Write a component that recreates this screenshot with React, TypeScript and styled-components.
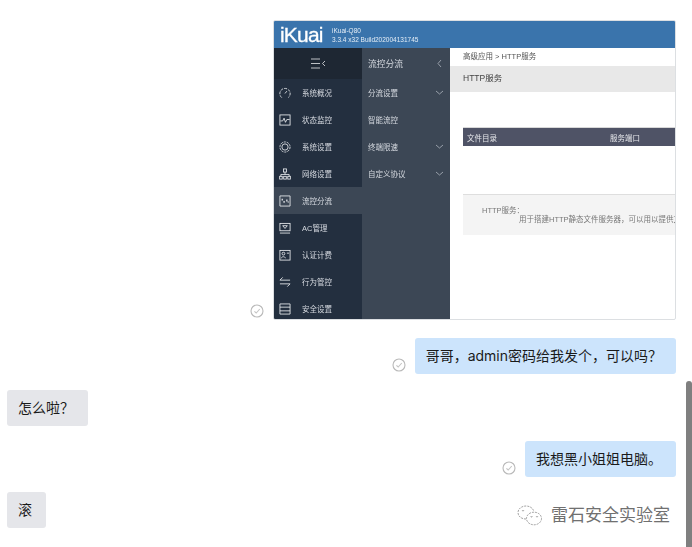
import React from "react";
import styled, { createGlobalStyle } from "styled-components";

const Global = createGlobalStyle`
  html, body { margin: 0; padding: 0; background: #fff; overflow: hidden; }
  body { font-family: "Liberation Sans", "Noto Sans CJK SC", sans-serif; }
`;

const Page = styled.div`
  position: relative;
  width: 692px;
  height: 547px;
  overflow: hidden;
  background: #fff;
`;
const Thread = styled.div`
  display: flex;
  flex-direction: column;
  padding: 20px 16px 0 7px;
`;
const Row = styled.div<{ $mine?: boolean; $gap: number }>`
  display: flex;
  justify-content: ${(p) => (p.$mine ? "flex-end" : "flex-start")};
  align-items: flex-end;
  gap: 9px;
  margin-bottom: ${(p) => p.$gap}px;
`;
const Bubble = styled.div<{ $mine?: boolean }>`
  height: 36px;
  line-height: 36px;
  padding: 0 14px 0 11px;
  border-radius: 3px;
  font-family: Inter, "Noto Sans CJK SC", sans-serif;
  font-size: 14px;
  color: #1a1a1a;
  white-space: nowrap;
  background: ${(p) => (p.$mine ? "#cce4fc" : "#e5e6ea")};
`;
const Sent = styled.svg`
  width: 14px;
  height: 14px;
  margin-bottom: 2px;
  flex: none;
`;

const Shot = styled.div`
  width: 403px;
  height: 300px;
  box-sizing: border-box;
  border: 1px solid #dcdfe2;
  border-radius: 2px;
  overflow: hidden;
  display: flex;
  flex-direction: column;
  background: #fff;
  filter: blur(0.3px);
`;
const Header = styled.div`
  height: 27px;
  flex: none;
  background: #3a74ac;
  display: flex;
  align-items: center;
  padding-left: 6px;
  gap: 8px;
  color: #e4edf6;
`;
const Logo = styled.div`
  font-size: 21px;
  line-height: 27px;
  color: #fff;
  letter-spacing: -0.8px;
  -webkit-text-stroke: 0.3px #fff;
  width: 44px;
`;
const Version = styled.div`
  font-size: 6.5px;
  line-height: 9px;
`;
const ShotBody = styled.div`
  flex: 1;
  display: flex;
  min-height: 0;
`;
const Side = styled.div`
  width: 88px;
  flex: none;
  background: #232f3f;
  display: flex;
  flex-direction: column;
`;
const SideTop = styled.div`
  height: 31px;
  background: #1e2733;
  display: flex;
  align-items: center;
  justify-content: center;
  flex: none;
`;
const SideItem = styled.div<{ $active?: boolean }>`
  height: 27px;
  flex: none;
  display: flex;
  align-items: center;
  padding-left: 5px;
  gap: 11px;
  font-size: 7.5px;
  color: #d5d9df;
  background: ${(p) => (p.$active ? "#3c4755" : "transparent")};
  svg { width: 12px; height: 12px; flex: none; }
`;
const SubNav = styled.div`
  width: 88px;
  flex: none;
  background: #3c4755;
  display: flex;
  flex-direction: column;
  color: #d5d9df;
`;
const SubHead = styled.div`
  height: 31px;
  display: flex;
  align-items: center;
  justify-content: space-between;
  padding: 0 6px;
  font-size: 8.75px;
  flex: none;
`;
const SubItem = styled.div`
  height: 27px;
  display: flex;
  align-items: center;
  justify-content: space-between;
  padding: 0 6px;
  font-size: 7.5px;
  flex: none;
`;
const Content = styled.div`
  flex: 1;
  min-width: 0;
  overflow: hidden;
  display: flex;
  flex-direction: column;
`;
const Crumb = styled.div`
  height: 18px;
  line-height: 17px;
  padding-left: 13px;
  font-size: 7.5px;
  color: #555;
  flex: none;
`;
const TitleBar = styled.div`
  height: 26px;
  line-height: 25px;
  background: #e8e8e8;
  padding-left: 13px;
  font-size: 8.5px;
  color: #444;
  flex: none;
`;
const TableHead = styled.div`
  margin: 35px 0 0 13px;
  height: 19px;
  background: #4f5366;
  border-top: 1px solid #d8d8d8;
  box-sizing: border-box;
  display: grid;
  grid-template-columns: 143px 1fr;
  align-items: center;
  padding-left: 4px;
  font-size: 7.5px;
  color: #e6e7ea;
  flex: none;
`;
const Note = styled.div`
  margin: 48px 0 0 13px;
  height: 41px;
  box-sizing: border-box;
  background: #f4f4f4;
  border-top: 1px solid #dedede;
  padding: 11px 0 0 19px;
  font-size: 7.5px;
  line-height: 9px;
  color: #777;
  white-space: nowrap;
  flex: none;
`;
const NoteLine = styled.div`
  padding-left: 37px;
`;

const Scrollbar = styled.div`
  position: absolute;
  right: 0;
  top: 381px;
  width: 6px;
  height: 166px;
  background: #7f7f7f;
  border-radius: 3px 3px 0 0;
`;
const Watermark = styled.div`
  position: absolute;
  left: 517px;
  top: 505px;
  display: flex;
  align-items: center;
  gap: 8px;
  font-size: 17px;
  line-height: 22px;
  color: #707070;
  text-shadow: 0 0 1px #fff;
  white-space: nowrap;
`;

const Check = () => (
  <Sent viewBox="0 0 14 14" fill="none">
    <circle cx="7" cy="7" r="6" stroke="#b9b9b9" strokeWidth="1.1" />
    <path d="M4.4 7.3 6.2 9 9.8 5" stroke="#c4c4c4" strokeWidth="1.1" />
  </Sent>
);

const Chevron = ({ dir }: { dir: "down" | "left" }) => (
  <svg width="9" height="9" viewBox="0 0 9 9" fill="none" stroke="#aeb5be" strokeWidth="0.8">
    <path d={dir === "down" ? "M1 3 4.5 6 8 3" : "M6 1 3 4.5 6 8"} />
  </svg>
);

const s = { fill: "none", stroke: "#eef0f3", strokeWidth: 0.9 };
const icons: Record<string, React.ReactNode> = {
  gauge: (
    <g {...s}>
      <path d="M3 11.5A5.6 5.6 0 1 1 10 11.5" strokeDasharray="3 1.2" />
      <path d="M6.5 7 8.5 4.5" />
    </g>
  ),
  pulse: (
    <g {...s}>
      <rect x="1" y="1" width="11" height="11" />
      <path d="M1.500 7.500H4L5.500 4.500 7 9 8.500 6H11.500" />
    </g>
  ),
  gear: (
    <g {...s}>
      <circle cx="6.5" cy="6.5" r="5.5" strokeDasharray="2.4 1" />
      <circle cx="6.5" cy="6.5" r="3.4" />
    </g>
  ),
  net: (
    <g {...s}>
      <rect x="4.8" y="1" width="3.4" height="3.4" />
      <path d="M6.500 4.500V7M2 9V7H11V9" />
      <rect x="0.7" y="9" width="2.8" height="3" />
      <rect x="5.1" y="9" width="2.8" height="3" />
      <rect x="9.5" y="9" width="2.8" height="3" />
    </g>
  ),
  flow: (
    <g {...s}>
      <path d="M1 1H12M1 12H12M1 1V12M12 1V12" />
      <path d="M3.500 4V6M5.500 6.500V8.500M8.500 5V7M10 7V8" strokeWidth="1.3" />
    </g>
  ),
  ac: (
    <g {...s}>
      <rect x="1" y="1.5" width="11" height="8" />
      <path d="M4 4H9L6.500 7ZM1 12H12" />
    </g>
  ),
  auth: (
    <g {...s}>
      <rect x="1" y="1.5" width="11" height="10.5" />
      <circle cx="4.8" cy="5" r="1.5" />
      <path d="M2.500 10C3 7.800 6.600 7.800 7 10M8.500 4.500H11" />
    </g>
  ),
  swap: (
    <g {...s}>
      <path d="M1 4.500H12M4 1.500 1 4.500M1 8.500H12M9 11.500 12 8.500" />
    </g>
  ),
  shield: (
    <g {...s}>
      <path d="M1 1H12V12H1ZM1 4.500H12M1 8.500H12" />
    </g>
  ),
};

const sideItems = [
  ["gauge", "系统概况"],
  ["pulse", "状态监控"],
  ["gear", "系统设置"],
  ["net", "网络设置"],
  ["flow", "流控分流"],
  ["ac", "AC管理"],
  ["auth", "认证计费"],
  ["swap", "行为管控"],
  ["shield", "安全设置"],
];
const subItems: [string, boolean][] = [
  ["分流设置", true],
  ["智能流控", false],
  ["终端限速", true],
  ["自定义协议", true],
];

export default function App() {
  return (
    <Page>
      <Global />
      <Thread>
        <Row $mine $gap={18}>
          <Check />
          <Shot>
            <Header>
              <Logo>iKuai</Logo>
              <Version>
                iKuai-Q80
                <br />
                3.3.4 x32 Build202004131745
              </Version>
            </Header>
            <ShotBody>
              <Side>
                <SideTop>
                  <svg width="15" height="11" viewBox="0 0 15 11" fill="none" stroke="#e6e8eb" strokeWidth="0.8">
                    <path d="M0 1H9M0 5.500H9M0 10H9M14 3 11.500 5.500 14 8" />
                  </svg>
                </SideTop>
                {sideItems.map(([icon, label]) => (
                  <SideItem key={label} $active={icon === "flow"}>
                    <svg viewBox="0 0 13 13">{icons[icon]}</svg>
                    <span>{label}</span>
                  </SideItem>
                ))}
              </Side>
              <SubNav>
                <SubHead>
                  <span>流控分流</span>
                  <Chevron dir="left" />
                </SubHead>
                {subItems.map(([label, more]) => (
                  <SubItem key={label}>
                    <span>{label}</span>
                    {more && <Chevron dir="down" />}
                  </SubItem>
                ))}
              </SubNav>
              <Content>
                <Crumb>高级应用 &gt; HTTP服务</Crumb>
                <TitleBar>HTTP服务</TitleBar>
                <TableHead>
                  <span>文件目录</span>
                  <span>服务端口</span>
                </TableHead>
                <Note>
                  HTTP服务：
                  <NoteLine>用于搭建HTTP静态文件服务器，可以用以提供文件</NoteLine>
                </Note>
              </Content>
            </ShotBody>
          </Shot>
        </Row>
        <Row $mine $gap={16}>
          <Check />
          <Bubble $mine>哥哥，admin密码给我发个，可以吗？</Bubble>
        </Row>
        <Row $gap={15}>
          <Bubble>怎么啦？</Bubble>
        </Row>
        <Row $mine $gap={15}>
          <Check />
          <Bubble $mine>我想黑小姐姐电脑。</Bubble>
        </Row>
        <Row $gap={0}>
          <Bubble>滚</Bubble>
        </Row>
      </Thread>
      <Scrollbar />
      <Watermark>
        <svg width="26" height="22" viewBox="0 0 26 22" fill="none" stroke="#8a8a8a" strokeWidth="0.8" strokeDasharray="2 1">
          <path d="M9 14C4 14 1 11 1 7.500S4.500 1 9 1c4 0 7 2.300 7.700 5" />
          <ellipse cx="17" cy="13.500" rx="7.500" ry="6.300" />
          <circle cx="6" cy="5.500" r="0.600" />
          <circle cx="14.500" cy="11.500" r="0.600" />
          <circle cx="20" cy="11.500" r="0.600" />
        </svg>
        <span>雷石安全实验室</span>
      </Watermark>
    </Page>
  );
}
